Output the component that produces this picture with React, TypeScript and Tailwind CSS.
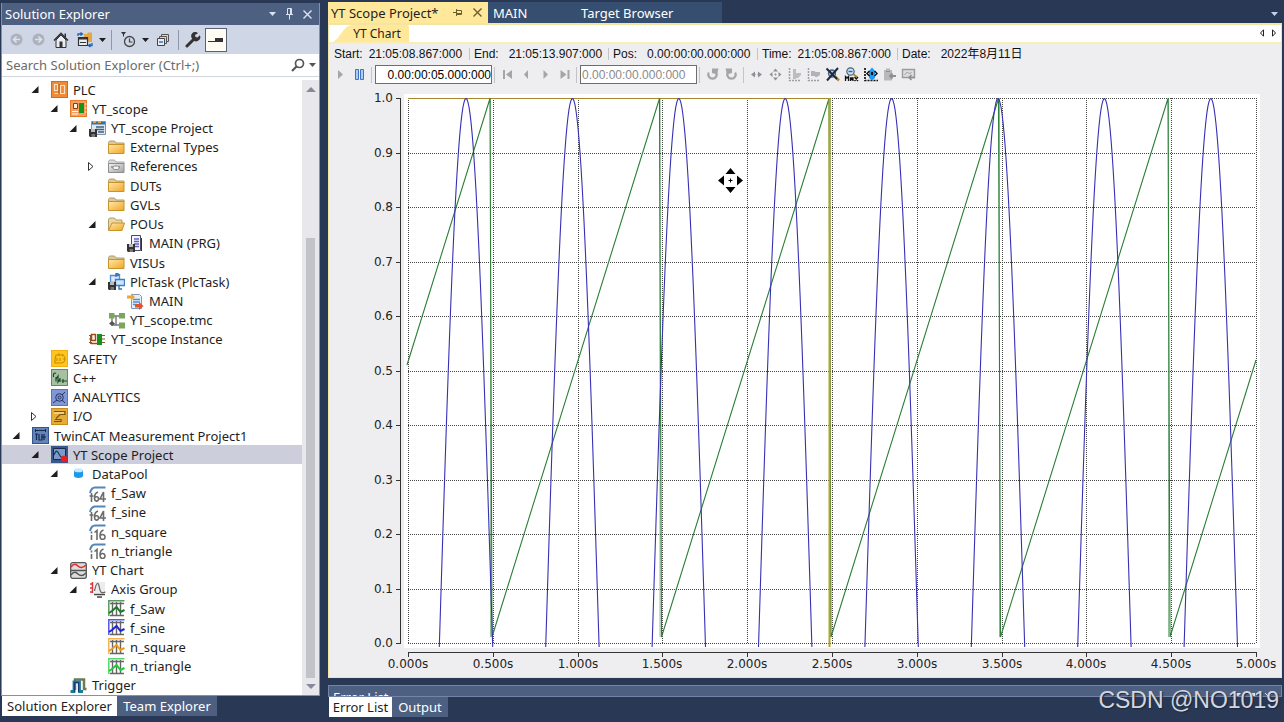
import { useState } from "react";
import type { ReactNode } from "react";

type Row = {
  label: string;
  level: number;
  icon: string;
  arrow?: "open" | "closed";
};

const rows: Row[] = [
  { label: "PLC", level: 1, icon: "plc", arrow: "open" },
  { label: "YT_scope", level: 2, icon: "plcProject", arrow: "open" },
  { label: "YT_scope Project", level: 3, icon: "project", arrow: "open" },
  { label: "External Types", level: 4, icon: "folder" },
  { label: "References", level: 4, icon: "refs", arrow: "closed" },
  { label: "DUTs", level: 4, icon: "folder" },
  { label: "GVLs", level: 4, icon: "folder" },
  { label: "POUs", level: 4, icon: "folderOpen", arrow: "open" },
  { label: "MAIN (PRG)", level: 5, icon: "prg" },
  { label: "VISUs", level: 4, icon: "folder" },
  { label: "PlcTask (PlcTask)", level: 4, icon: "task", arrow: "open" },
  { label: "MAIN", level: 5, icon: "taskCall" },
  { label: "YT_scope.tmc", level: 4, icon: "tmc" },
  { label: "YT_scope Instance", level: 3, icon: "instance" },
  { label: "SAFETY", level: 1, icon: "safety" },
  { label: "C++", level: 1, icon: "cpp" },
  { label: "ANALYTICS", level: 1, icon: "analytics" },
  { label: "I/O", level: 1, icon: "io", arrow: "closed" },
  { label: "TwinCAT Measurement Project1", level: 0, icon: "measurement", arrow: "open" },
  { label: "YT Scope Project", level: 1, icon: "scope", arrow: "open" },
  { label: "DataPool", level: 2, icon: "pool", arrow: "open" },
  { label: "f_Saw", level: 3, icon: "n64" },
  { label: "f_sine", level: 3, icon: "n64" },
  { label: "n_square", level: 3, icon: "n16" },
  { label: "n_triangle", level: 3, icon: "n16" },
  { label: "YT Chart", level: 2, icon: "chart", arrow: "open" },
  { label: "Axis Group", level: 3, icon: "axis", arrow: "open" },
  { label: "f_Saw", level: 4, icon: "chGreen" },
  { label: "f_sine", level: 4, icon: "chBlue" },
  { label: "n_square", level: 4, icon: "chOrange" },
  { label: "n_triangle", level: 4, icon: "chLime" },
  { label: "Trigger", level: 2, icon: "trigger" },
];

function Floppy() {
  return (
    <g>
      <path d="M0 9h8v8H1l-1-1z" fill="#333" />
      <path d="M2 9h4v3H2z" fill="#bbb" />
      <path d="M2.500 14h3.500v3h-3.500z" fill="#777" />
    </g>
  );
}

function Channel({ color }: { color: string }) {
  return (
    <g fill="none">
      <path d="M4.500 2v14M8.500 2v14M12.500 2v14M2 3.500h14M2 15.500h14" stroke="#666" strokeWidth="1.400" />
      <path d="M.8 16V.8H16.500" stroke={color} strokeWidth="1.500" opacity=".75" />
      <path d="M1 13l3-2 4.500-4 4 5 4-2" stroke={color} strokeWidth="2" />
    </g>
  );
}

function Num({ children }: { children: ReactNode }) {
  return (
    <g fill="none" strokeWidth="1.600">
      <path d="M1 8c1-4 3-5.500 5-5.500h10.500" stroke="#5586b8" strokeWidth="2" />
      <g stroke="#6c6c6c">{children}</g>
    </g>
  );
}

const drawings: Record<string, ReactNode> = {
  plc: (
    <g>
      <path d="M0 0h17v17H0z" fill="#d9691a" />
      <path d="M1 1h15v15H1z" fill="#ee8b38" />
      <path d="M3.500 3.500h3v6h-3zM9.500 4.500h4v8h-4zM3.500 12.500h4" fill="none" stroke="#fbe3c8" strokeWidth="1.200" />
      <path d="M8 3v10" stroke="#b9500c" />
    </g>
  ),
  plcProject: (
    <g>
      <path d="M0 0h17v17H0z" fill="#e67a2a" />
      <path d="M1 1h15v15H1z" fill="#f2a163" />
      <path d="M3.500 3.500h4v5h-4z" fill="#fff1de" stroke="#8a3d10" />
      <path d="M2 11.500h6M2 14h6M15 4h1.500M15 8h1.500M15 12h1.500" stroke="#fff" />
      <path d="M9 3h5v10H9z" fill="#12951b" />
    </g>
  ),
  project: (
    <g>
      <path d="M2.500 1.500h14v13h-14z" fill="#dbe7f2" stroke="#7d93ab" />
      <path d="M3 2h13v2.500H3z" fill="#3a6ea5" />
      <path d="M4 1h3v2H4zM9 1h3v2H9z" fill="#f0a040" />
      <path d="M7 7h8M7 9.500h8M9 12h6" stroke="#41637e" strokeWidth="1.300" />
      <Floppy />
    </g>
  ),
  folder: (
    <g>
      <path d="M.5 3.500l1-1.500h5l1.500 2h8v2H.5z" fill="#d9c9a0" stroke="#b39c64" />
      <path d="M.5 5.500h15.500v9H.5z" fill="url(#folderFill)" stroke="#c8922b" />
    </g>
  ),
  folderOpen: (
    <g>
      <path d="M.5 14V3.500l1-1.500h5l1.500 2h6v3" fill="#e7d6a6" stroke="#b39c64" />
      <path d="M.5 14.500L4 7h12.500l-2.500 7.500z" fill="url(#folderFill)" stroke="#c8922b" />
    </g>
  ),
  refs: (
    <g>
      <path d="M.5 3.500l1-1.500h5l1.500 2h8v2H.5z" fill="#d8d8d8" stroke="#aaa" />
      <path d="M.5 5.500h15.500v9H.5z" fill="url(#greyFill)" stroke="#8d8d8d" />
      <path d="M3 9h3M10 9h2" stroke="#666" />
      <rect x="5" y="8" width="6" height="3.500" rx="1.500" fill="#f5f5f5" stroke="#888" />
    </g>
  ),
  prg: (
    <g>
      <path d="M4.500.5h9v15h-9z" fill="#f5f5fc" stroke="#4b4b63" />
      <path d="M14.500 3v13" stroke="#333" />
      <path d="M7 4h5M7 6.500h5M7 9h5M8 11.500h4" stroke="#6560c8" strokeWidth="1.400" />
      <Floppy />
    </g>
  ),
  task: (
    <g>
      <path d="M2.500 2.500h9v7h-9z" fill="#d8eaff" stroke="#4a90d9" strokeWidth="1.300" />
      <path d="M7.500 6.500h9v6h-9z" fill="#cfe4fa" stroke="#3b7fc6" strokeWidth="1.300" />
      <path d="M8 0l3 1.500L8 3zM11 12.500V16h3" fill="none" stroke="#2f74bd" strokeWidth="1.400" />
      <Floppy />
    </g>
  ),
  taskCall: (
    <g>
      <path d="M4.500 1.500h8l2 2v12h-10z" fill="#e4effa" stroke="#7e99bb" />
      <path d="M6 6.500h7M6 9h7M6 11.500h4" stroke="#5a8fcc" strokeWidth="1.300" />
      <path d="M0 2.500h4V.5l4 3.500-4 3.500V5.500H0z" fill="#f5a42c" />
      <path d="M8 11h4V9l4.500 4-4.500 4v-2.500H8z" fill="#e4512b" />
    </g>
  ),
  tmc: (
    <g>
      <path d="M4 5v8h8M4 4h8M8 4v9" fill="none" stroke="#777" strokeWidth="1.400" />
      <path d="M1 1h5.500v5.500H1zM11 1h6v5.500h-6zM11 10.500h6v6h-6z" fill="#79a85a" />
      <path d="M4 9l3 2.500L4 14l-3-2.500z" fill="#555" />
    </g>
  ),
  instance: (
    <g>
      <path d="M1.500 4v9M0 4.500h3M0 8h3M0 11.500h3M13 4.500h3M13 8h3M13 11.500h3" stroke="#8a5a2c" />
      <path d="M2.500 3.500h4v6h-4z" fill="#fff4e8" stroke="#a5471a" strokeWidth="1.500" />
      <path d="M2 12.500h6" stroke="#a5471a" strokeWidth="1.500" />
      <path d="M8 3h5v11H8z" fill="#14901c" />
    </g>
  ),
  safety: (
    <g>
      <path d="M0 0h17v17H0z" fill="#f2ae12" />
      <path d="M1 1h15v15H1z" fill="#ffc61e" />
      <path d="M5 5h5a3.500 3.500 0 010 8H4V9zM8 3v3M12 4l-1 2M14 9h-2M6 8v3M9 8v3" fill="none" stroke="#c98b06" strokeWidth="1.100" />
    </g>
  ),
  cpp: (
    <g>
      <path d="M0 0h17v17H0z" fill="#5f8d5d" />
      <path d="M1 1h15v15H1z" fill="#a6c19f" />
      <path d="M5 4.500C3 3 2 5 2.500 8M5 8v4.500M5 10l2-3v6l2-3M9 9v4M12 10v4M10.500 12h3.500M14 12h2" fill="none" stroke="#1c4a25" strokeWidth="1.200" />
    </g>
  ),
  analytics: (
    <g>
      <path d="M0 0h17v17H0z" fill="#5b74bd" />
      <path d="M1 1h15v15H1z" fill="#8196d4" />
      <circle cx="8.500" cy="8.500" r="3.800" fill="none" stroke="#23355f" />
      <circle cx="8.500" cy="8.500" r="1.500" fill="none" stroke="#23355f" />
      <path d="M2 14l4-3M11 6l3-3M11 11l3 3" fill="none" stroke="#23355f" />
    </g>
  ),
  io: (
    <g>
      <path d="M0 0h17v17H0z" fill="#c98b1a" />
      <path d="M1 1h15v15H1z" fill="#e6ac3a" />
      <path d="M3 3.500h11v3H9l-4 4M3 13.500h7v-2H4" fill="none" stroke="#7d520a" strokeWidth="1.200" />
      <path d="M3 5h10" stroke="#fff0c8" />
    </g>
  ),
  measurement: (
    <g>
      <path d="M0 0h17v17H0z" fill="#35568c" />
      <path d="M1 1h15v15H1z" fill="#6384b8" />
      <path d="M3 3.500h11M3.500 2v3M13.500 2v3" stroke="#16294c" />
      <path d="M3 7h3M4.500 7v6M7 7v6h3V7M12 7v6M9 10h5" fill="none" stroke="#16294c" strokeWidth="1.200" />
    </g>
  ),
  scope: (
    <g>
      <path d="M0 0h17v17H0z" fill="#38588c" />
      <path d="M2.500 2.500h12v11h-12z" fill="#7d9ac6" stroke="#162b50" />
      <path d="M3 9c2-5 3-5 5-1s3 4 4 2" fill="none" stroke="#1c3765" strokeWidth="1.200" />
      <circle cx="13" cy="13" r="3.200" fill="#ee1c1c" />
    </g>
  ),
  pool: (
    <g>
      <path d="M4 5v6c0 2.500 9 2.500 9 0V5z" fill="#1a9bea" />
      <ellipse cx="8.500" cy="5.200" rx="4.500" ry="2" fill="#c3e7fb" />
    </g>
  ),
  n64: (
    <Num>
      <path d="M2.500 8v9M.5 11h4M9 7c-3 1-3.500 3-3.500 6 0 4 4 4 4 1s-4-3-4 0M14.500 17V7l-3.500 7h6" />
    </Num>
  ),
  n16: (
    <Num>
      <path d="M2.500 8.500v2M2.500 12v5M5.500 9.500l2.500-2v9.500M14.500 7c-3 1-3.500 3-3.500 6 0 4.500 5 4.500 5 1s-5-3-5 0" />
    </Num>
  ),
  chart: (
    <g fill="none">
      <rect x=".7" y=".7" width="15.600" height="15.600" rx="2" fill="#ddd" stroke="#555" strokeWidth="1.300" />
      <path d="M1 8.500h15" stroke="#555" strokeWidth="1.500" />
      <path d="M1 5c3-4 5-3 7-1s5 2 8-1" stroke="#e52b2b" strokeWidth="1.700" />
      <path d="M1 13c3-4 5-3 7-1s5 2 8-1" stroke="#555" strokeWidth="1.500" />
    </g>
  ),
  axis: (
    <g fill="none">
      <path d="M6 1h10v11H6z" fill="#ececec" />
      <path d="M3.500 1v11M1 3h3M1 7h3M1 11h3" stroke="#e03434" strokeWidth="1.500" />
      <path d="M5.500 10c2-10 4-9 5-3s3 5 6 4" stroke="#666" strokeWidth="1.200" />
      <path d="M5 13.500h11M8 16h5" stroke="#444" strokeWidth="1.400" />
    </g>
  ),
  chGreen: <Channel color="#1c7a26" />,
  chBlue: <Channel color="#2020e0" />,
  chOrange: <Channel color="#f09818" />,
  chLime: <Channel color="#1fc93a" />,
  trigger: (
    <g fill="none">
      <path d="M5 13V2.500h9V12h2.500" stroke="#6f7a50" strokeWidth="2.500" />
      <path d="M.5 14.500H4V5h5.500v9.500H13" stroke="#1a7c98" strokeWidth="2.800" />
      <path d="M4.500 15V5.500h4V15" stroke="#103f78" strokeWidth="1.200" />
    </g>
  ),
};

function TreeRow({ row, active, onSelect }: { row: Row; active: boolean; onSelect: () => void }) {
  return (
    <li
      className={`flex min-h-0 flex-1 items-center ${active ? "bg-[#cccedb]" : ""}`}
      style={{ paddingLeft: 8 + row.level * 19 }}
    >
      <span className="w-[22px] shrink-0">
        {row.arrow && (
          <button aria-label={`Toggle ${row.label}`} className="block">
            <svg width="11" height="11" viewBox="0 0 11 11">
              {row.arrow === "open" ? (
                <path d="M9.500 2v7h-7z" fill="#1e1e1e" />
              ) : (
                <path d="M2.500 1.500v8l4.500-4z" fill="#fff" stroke="#333" />
              )}
            </svg>
          </button>
        )}
      </span>
      <button onClick={onSelect} className="flex items-center gap-[5px] whitespace-nowrap leading-4">
        <svg width="17" height="17" viewBox="0 0 17 17" className="shrink-0">
          {drawings[row.icon]}
        </svg>
        {row.label}
      </button>
    </li>
  );
}

function Caret({ color = "#1e1e1e" }: { color?: string }) {
  return (
    <svg width="7" height="4" viewBox="0 0 7 4">
      <path d="M0 0h7L3.500 4z" fill={color} />
    </svg>
  );
}

function ExplorerToolbar() {
  return (
    <div className="flex h-[29px] shrink-0 items-center bg-[#cfd6e5] pl-[3px]">
      <button aria-label="Back" className="flex w-[22px] justify-center">
        <svg width="13" height="13" viewBox="0 0 13 13">
          <circle cx="6.500" cy="6.500" r="6" fill="#adb2bf" />
          <path d="M10 6.500H3.500M6.500 3.500l-3 3 3 3" fill="none" stroke="#dde2ec" strokeWidth="1.500" />
        </svg>
      </button>
      <button aria-label="Forward" className="flex w-[22px] justify-center">
        <svg width="13" height="13" viewBox="0 0 13 13">
          <circle cx="6.500" cy="6.500" r="6" fill="#adb2bf" />
          <path d="M3 6.500h6.500M6.500 3.500l3 3-3 3" fill="none" stroke="#dde2ec" strokeWidth="1.500" />
        </svg>
      </button>
      <button aria-label="Home" className="flex w-[24px] justify-center">
        <svg width="16" height="16" viewBox="0 0 16 16">
          <path d="M3 8v7.500h10V8L8 3z" fill="#e9ecf4" stroke="#333" />
          <path d="M1 8.500l7-7 7 7" fill="none" stroke="#333" strokeWidth="1.600" />
          <path d="M11.500 1.500h1.500v4h-1.500zM6.500 9.500h3v6h-3z" fill="#333" />
        </svg>
      </button>
      <button aria-label="Sync views" className="flex w-[24px] justify-center">
        <svg width="16" height="16" viewBox="0 0 16 16">
          <path d="M7 2h3l1-1.500h4V10H7z" fill="#e5a645" />
          <path d="M1.500 5.500h9v8h-9z" fill="#e9ecf4" stroke="#333" strokeWidth="1.200" />
          <path d="M1 5.500h10v2H1zM3 10h6v1H3z" fill="#333" />
          <path d="M1 4V2h4M3.500.5L5.500 2l-2 1.500M15 11v2.500h-3M13.500 12l-2 1.500 2 1.500" fill="none" stroke="#1d62b5" strokeWidth="1.300" />
        </svg>
      </button>
      <span className="flex w-[10px] justify-center"><Caret /></span>
      <span className="mx-[4px] h-5 w-px bg-[#8e97ab]" />
      <button aria-label="Pending changes filter" className="ml-[2px] flex w-[20px] justify-center">
        <svg width="16" height="16" viewBox="0 0 16 16">
          <path d="M1 0h5L4 2.500V5L3 4V2.500z" fill="#333" />
          <circle cx="9.500" cy="9.500" r="5" fill="none" stroke="#444" strokeWidth="1.300" />
          <path d="M9.500 6.500v3.500h3" fill="none" stroke="#444" strokeWidth="1.200" />
        </svg>
      </button>
      <span className="flex w-[14px] justify-center"><Caret /></span>
      <button aria-label="Collapse all" className="flex w-[22px] justify-center">
        <svg width="14" height="14" viewBox="0 0 14 14">
          <path d="M5.500 3V1.500h7v7H11M3.500 5V3.500h7v7H9" fill="none" stroke="#555" />
          <path d="M1.500 5.500h7v7h-7z" fill="#e9ecf4" stroke="#444" />
          <path d="M3 9h4" stroke="#1d62b5" strokeWidth="1.300" />
        </svg>
      </button>
      <span className="mx-[4px] h-5 w-px bg-[#8e97ab]" />
      <button aria-label="Properties" className="flex w-[20px] justify-center">
        <svg width="16" height="16" viewBox="0 0 16 16">
          <path d="M2 14l6.500-6.500" stroke="#333" strokeWidth="3" strokeLinecap="round" />
          <path d="M13 1.200A4 4 0 107.500 7a4 4 0 007.300-3.800L12.500 5.500l-2-.5-.5-2z" fill="#333" />
        </svg>
      </button>
      <button aria-label="Preview selected items" className="ml-[2px] flex h-6 w-[22px] items-center justify-center border border-[#5a6273] bg-[#fffcf4]">
        <svg width="16" height="8" viewBox="0 0 16 8">
          <path d="M0 5h7V2h8v4H0z" fill="#333" />
        </svg>
      </button>
    </div>
  );
}

function SolutionExplorer() {
  const [selected, setSelected] = useState(19);

  return (
    <aside className="flex w-[320px] shrink-0 flex-col pl-[1px] pt-[3px]">
      <div className="flex min-h-0 flex-1 flex-col border border-t-0 border-[#8591ab] bg-white">
        <div className="flex h-[22px] shrink-0 items-center bg-[#4d6082] pl-[3px] pr-[4px] text-white">
          <h2 className="flex-1">Solution Explorer</h2>
          <button aria-label="Window position" className="flex w-[17px] justify-center"><Caret color="#dbe2f0" /></button>
          <button aria-label="Auto hide" className="flex w-[17px] justify-center">
            <svg width="9" height="12" viewBox="0 0 9 12">
              <path d="M2.500 6.500v-6h4v6M1 6.500h7M4.500 7v4.500M5.500 1v5" fill="none" stroke="#dbe2f0" />
            </svg>
          </button>
          <button aria-label="Close" className="ml-[2px] flex w-[15px] justify-center">
            <svg width="9" height="9" viewBox="0 0 9 9">
              <path d="M.5.5l8 8M8.500.5l-8 8" stroke="#dbe2f0" strokeWidth="1.400" />
            </svg>
          </button>
        </div>
        <ExplorerToolbar />
        <div className="flex h-[23px] shrink-0 items-center border-b border-[#d0d5e0] pr-[3px]">
          <input
            aria-label="Search Solution Explorer"
            placeholder="Search Solution Explorer (Ctrl+;)"
            className="min-w-0 flex-1 pl-[4px] outline-none placeholder:text-[#6b6b6b]"
          />
          <button aria-label="Search" className="mr-[4px]">
            <svg width="14" height="14" viewBox="0 0 14 14">
              <circle cx="8.500" cy="5.500" r="4" fill="none" stroke="#555" strokeWidth="1.700" />
              <path d="M5.500 8.500L1 13" stroke="#555" strokeWidth="2.200" />
            </svg>
          </button>
          <button aria-label="Search options"><Caret color="#555" /></button>
        </div>
        <div className="flex min-h-0 flex-1 pt-[3px]">
          <ul className="flex min-w-0 flex-1 flex-col">
            {rows.map((row, i) => (
              <TreeRow key={i} row={row} active={selected === i} onSelect={() => setSelected(i)} />
            ))}
          </ul>
          <div className="flex w-[17px] flex-col items-center bg-[#e8e8ec]">
            <button aria-label="Scroll up" className="py-[7px]">
              <svg width="10" height="5" viewBox="0 0 10 5"><path d="M0 5h10L5 0z" fill="#868999" /></svg>
            </button>
            <div className="grow-[25]" />
            <div className="w-[9px] grow-[79] bg-[#c2c3c9]" />
            <button aria-label="Scroll down" className="py-[6px]">
              <svg width="10" height="5" viewBox="0 0 10 5"><path d="M0 0h10L5 5z" fill="#868999" /></svg>
            </button>
          </div>
        </div>
      </div>
      <div className="flex h-[20px] shrink-0 pl-[1px]">
        <button className="w-[115px] bg-white">Solution Explorer</button>
        <button className="w-[100px] bg-[#4d6082] text-white">Team Explorer</button>
      </div>
      <div className="h-[6px]" />
    </aside>
  );
}

function ToolButton({ label, children }: { label: string; children: ReactNode }) {
  return (
    <button aria-label={label} className="flex w-[19px] shrink-0 justify-center">
      <svg width="15" height="15" viewBox="0 0 15 15">{children}</svg>
    </button>
  );
}

function Sep() {
  return <span className="mx-[2px] h-4 w-[2px] shrink-0 border-l border-[#c4c4c8]" />;
}

function ScopeToolbar() {
  return (
    <div className="flex h-[21px] shrink-0 items-center pl-[2px]">
      <ToolButton label="Play"><path d="M5 3v9l5-4.500z" fill="#a5a5a8" /></ToolButton>
      <ToolButton label="Pause">
        <path d="M3.500 2.500h3v10h-3zM8.500 2.500h3v10h-3z" fill="#a9cdf7" stroke="#3f74bd" />
      </ToolButton>
      <Sep />
      <input
        aria-label="Display width"
        defaultValue="0.00:00:05.000:000"
        className="h-[19px] w-[117px] border border-[#6e6e6e] bg-white text-right text-xs text-black"
      />
      <Sep />
      <ToolButton label="First"><path d="M3 3h2v9H3zM12 3v9L6 7.500z" fill="#a5a5a8" /></ToolButton>
      <ToolButton label="Previous"><path d="M9 3v9L5 7.500z" fill="#a5a5a8" /></ToolButton>
      <ToolButton label="Next"><path d="M5.500 3v9l4.500-4.500z" fill="#a5a5a8" /></ToolButton>
      <ToolButton label="Last"><path d="M10.500 3h2v9h-2zM3.500 3v9l6-4.500z" fill="#a5a5a8" /></ToolButton>
      <Sep />
      <input
        aria-label="Display position"
        defaultValue="0.00:00:00.000:000"
        className="h-[19px] w-[117px] border border-[#6e6e6e] bg-white pl-[1px] text-xs text-[#8a8a8a]"
      />
      <Sep />
      <ToolButton label="Undo">
        <path d="M3.800 5.500a4.200 4.200 0 107.400 0" fill="none" stroke="#a5a5a8" strokeWidth="2.200" />
        <path d="M7 1.500h6.500L12 7.500 7 6z" fill="#a5a5a8" />
      </ToolButton>
      <ToolButton label="Redo">
        <path d="M11.200 5.500a4.200 4.200 0 11-7.400 0" fill="none" stroke="#a5a5a8" strokeWidth="2.200" />
        <path d="M8 1.500H1.500L3 7.500 8 6z" fill="#a5a5a8" />
      </ToolButton>
      <Sep />
      <ToolButton label="Scroll X">
        <path d="M2 7.500l4-3v6zM13 7.500l-4-3v6z" fill="#909094" />
        <path d="M5 7.500h1.500M8.500 7.500H10" stroke="#909094" strokeWidth="1.600" />
      </ToolButton>
      <ToolButton label="Scroll XY">
        <path d="M1.500 7.500l3-2.500v5zM13.500 7.500l-3-2.500v5zM7.500 1.500l2.500 3H5zM7.500 13.500l2.500-3H5z" fill="#909094" />
        <path d="M6.500 7.500h2M7.500 6.500v2" stroke="#909094" />
      </ToolButton>
      <ToolButton label="Zoom X">
        <path d="M2.500 1v12.500H14" fill="none" stroke="#a0a0a4" strokeWidth="1.500" strokeDasharray="2 1" />
        <path d="M6 2h3v10H6zM9 6h5v2l-3 3H9z" fill="#bdbdc0" />
      </ToolButton>
      <ToolButton label="Zoom XY">
        <path d="M2.500 1v12.500H14" fill="none" stroke="#a0a0a4" strokeWidth="1.500" strokeDasharray="2 1" />
        <path d="M5 4h4v5H5zM9 5h5v3l-3 2H9z" fill="#b3b3b7" />
      </ToolButton>
      <ToolButton label="Reset zoom">
        <circle cx="7" cy="6.500" r="3.500" fill="#b4cbe0" stroke="#47607c" strokeWidth="1.300" />
        <path d="M10 9.500l4 4" stroke="#b18a35" strokeWidth="2.500" />
        <path d="M1.500 1.500L12 12M13 1L2 13.500" stroke="#1f2b3c" strokeWidth="2" />
      </ToolButton>
      <ToolButton label="Zoom max">
        <circle cx="6.500" cy="4.500" r="3.700" fill="#cfe3f5" stroke="#47607c" strokeWidth="1.200" />
        <path d="M4.500 4.500h4" stroke="#2268b8" strokeWidth="1.500" />
        <path d="M9 7l4 3" stroke="#b18a35" strokeWidth="2" />
        <path d="M1.500 14V9.500l1.500 1.500 1.500-1.500V14M6.500 14v-3h2.500v3M6.500 12.500H9M10.500 10l3.500 4M14 10l-3.500 4" fill="none" stroke="#111" strokeWidth="1.300" />
      </ToolButton>
      <ToolButton label="Auto scale">
        <path d="M2 1v12.500h13" fill="none" stroke="#111" strokeWidth="1.700" strokeDasharray="2 1" />
        <path d="M6 4l3-3.500L12 4v7l-3 2.500L6 11z" fill="#1d9bf5" />
        <path d="M6.500 4L4 6.500 6.500 9M11.500 4L14 6.500 11.500 9" fill="none" stroke="#111" strokeWidth="1.500" />
        <path d="M9 5v3" stroke="#111" strokeWidth="2" />
      </ToolButton>
      <ToolButton label="Paste">
        <path d="M2 3h2V1.500h4V3h2v10.500H2z" fill="#b9b9bc" />
        <path d="M4 4.500h4" stroke="#909094" />
        <path d="M14 9H9M10.500 6.500L8 9l2.500 2.500" fill="none" stroke="#8f8f93" strokeWidth="1.800" />
      </ToolButton>
      <ToolButton label="Export picture">
        <path d="M1.500 2.500h12v8h-12z" fill="#dcdcde" stroke="#9b9b9f" strokeWidth="1.400" />
        <path d="M3.500 8l3-3 2 2 2-2" fill="none" stroke="#9b9b9f" />
        <path d="M14 10.500H8M10.500 8L8 10.500l2.500 2.500" fill="none" stroke="#8f8f93" strokeWidth="1.600" />
      </ToolButton>
    </div>
  );
}

// plot geometry, in the units of the chart's viewBox
const LEFT = 408;
const TOP = 98.5;
const WIDTH = 848;
const HEIGHT = 545;

function sinePath() {
  const pts: string[] = [];
  for (let x = LEFT; x <= LEFT + WIDTH; x += 1) {
    const v = Math.cos((2 * Math.PI * (x - 466)) / 106.4);
    pts.push(`${x},${(TOP + HEIGHT - HEIGHT * v).toFixed(1)}`);
  }
  return pts.join(" ");
}

function sawPath() {
  const pts = ["407,365"];
  for (let i = 0; i < 5; i++) {
    const x = 490 + i * 169.5;
    pts.push(`${x},${TOP}`, `${x + 2},637`);
  }
  pts.push("1256,360");
  return pts.join(" ");
}

function Chart() {
  const ys = Array.from({ length: 11 }, (_, i) => i);
  return (
    <svg viewBox="329 85 952 592" className="min-h-0 w-full flex-1" role="img" aria-label="YT Chart">
      <defs>
        <clipPath id="plot"><rect x="404" y="94" width="856" height="553" /></clipPath>
      </defs>
      <rect x="404" y="94" width="856" height="554" fill="#fff" />
      <g stroke="#444" strokeDasharray="1 1" shapeRendering="crispEdges">
        {ys.map((i) => (
          <path key={`h${i}`} d={`M408 ${Math.round(98 + i * 54.5) + 0.5}H1256`} />
        ))}
        {ys.map((i) => (
          <path key={`v${i}`} d={`M${Math.round(408 + i * 84.8) + 0.5} 98V644`} />
        ))}
      </g>
      <g fill="none" clipPath="url(#plot)">
        <path d="M408 98.500H829" stroke="#a8872f" />
        <path d="M490.500 98V637M660 98V637M830.500 98V637M999.500 98V637M1168.500 98V637" stroke="#2d7d36" opacity=".5" />
        <polyline points={sawPath()} stroke="#2b7f36" strokeWidth="1.100" />
        <path d="M829.500 98V647" stroke="#b5a42c" strokeWidth="2" />
        <polyline points={sinePath()} stroke="#3630b5" strokeWidth="1.100" />
      </g>
      <g stroke="#333" fill="none" shapeRendering="crispEdges">
        <path d="M400.500 98V644M408 652.500H1256" />
        {ys.map((i) => (
          <path key={i} d={`M396 ${Math.round(98 + i * 54.5) + 0.5}h5M${Math.round(408 + i * 84.8) + 0.5} 652v5`} />
        ))}
      </g>
      <g fontFamily="DejaVu Sans, sans-serif" fontSize="12" fill="#222">
        {ys.map((i) => (
          <text key={`y${i}`} x="393" y={Math.round(102 + i * 54.5)} textAnchor="end">
            {(1 - i / 10).toFixed(1)}
          </text>
        ))}
        {ys.map((i) => (
          <text key={`x${i}`} x={Math.round(408 + i * 84.8)} y="668" textAnchor="middle">
            {(i / 2).toFixed(3)}s
          </text>
        ))}
      </g>
      <g fill="#000">
        <path d="M730.500 168l5 6h-10zM730.500 193l5-6h-10zM718 180.500l6-5v10zM743 180.500l-6-5v10z" />
        <path d="M728.500 180h4v1h-4zM730 178.500h1v4h-1z" />
      </g>
    </svg>
  );
}

const times = [
  { label: "Start:", value: "21:05:08.867:000", cls: "w-[140px] gap-[6px] pl-[5px]" },
  { label: "End:", value: "21:05:13.907:000", cls: "w-[139px] gap-[10px] border-l pl-[4px]" },
  { label: "Pos:", value: "0.00:00:00.000:000", cls: "w-[149px] gap-[10px] border-l pl-[4px]" },
  { label: "Time:", value: "21:05:08.867:000", cls: "w-[140px] gap-[6px] border-l pl-[4px]" },
  { label: "Date:", value: "2022年8月11日", cls: "gap-[10px] border-l pl-[4px]" },
];

function ScopeWindow() {
  return (
    <section className="flex min-h-0 flex-1 flex-col">
      <div className="flex h-[21px] shrink-0 items-stretch pr-[4px]">
        <div className="flex w-[160px] items-center bg-[#ffe89a] pl-[3px] pr-[6px]">
          <button className="flex-1 whitespace-nowrap text-left text-[#1e1e1e]">YT Scope Project*</button>
          <button aria-label="Pin tab">
            <svg width="10" height="9" viewBox="0 0 10 9">
              <path d="M0 4.500h3.500M3.500 1v7M3.500 2.500h5v4h-5M4 5.500h4" fill="none" stroke="#6d5f2e" />
            </svg>
          </button>
          <button aria-label="Close tab" className="ml-[10px]">
            <svg width="9" height="9" viewBox="0 0 9 9">
              <path d="M.5.5l8 8M8.500.5l-8 8" stroke="#6d5f2e" strokeWidth="1.400" />
            </svg>
          </button>
        </div>
        <button className="w-[84px] bg-[#364e6f] pl-[5px] text-left text-white">MAIN</button>
        <button className="w-[150px] bg-[#364e6f] pl-[9px] text-left text-white">Target Browser</button>
        <div className="flex-1" />
        <button aria-label="Window list" className="pt-[2px]"><Caret color="#c5d2ea" /></button>
      </div>
      <div className="flex min-h-0 flex-1 flex-col border border-t-2 border-[#f3e6a4] bg-[#eeeef0]">
        <div className="flex h-[19px] shrink-0 items-end justify-between border-b-2 border-[#faeeb4] bg-white pr-[4px]">
          <button className="relative h-[17px] w-[80px] pl-[16px] text-xs text-[#1e1e1e]">
            <svg className="absolute inset-0 h-full w-full" viewBox="0 0 80 17" preserveAspectRatio="none">
              <path d="M4 17C12 13 14 0 24 0h54q2 0 2 2v15z" fill="#ffe89a" />
            </svg>
            <span className="relative">YT Chart</span>
          </button>
          <div className="flex gap-[6px] pb-[5px]">
            <button aria-label="Scroll tabs left">
              <svg width="6" height="8" viewBox="0 0 6 8"><path d="M4.500.8v6.400L1.500 4z" fill="none" stroke="#222" /></svg>
            </button>
            <button aria-label="Scroll tabs right">
              <svg width="6" height="8" viewBox="0 0 6 8"><path d="M1.500.8v6.400l3-3.200z" fill="none" stroke="#222" /></svg>
            </button>
          </div>
        </div>
        <div className="flex h-[20px] shrink-0 items-center font-['Liberation_Sans','Noto_Sans_CJK_SC',sans-serif] text-xs leading-3 text-[#111]">
          {times.map((t) => (
            <div key={t.label} className={`flex shrink-0 border-[#c4c4c8] ${t.cls}`}>
              <span>{t.label}</span>
              <span>{t.value}</span>
            </div>
          ))}
        </div>
        <div className="flex shrink-0 font-['Liberation_Sans',sans-serif]">
          <ScopeToolbar />
        </div>
        <Chart />
      </div>
    </section>
  );
}

function ErrorPanel() {
  return (
    <section className="relative mt-[7px] shrink-0">
      <div className="flex h-[12px] items-start justify-between overflow-hidden border border-[#7484a8] bg-[#4d6082] pl-[4px] pr-[8px]">
        <h2 className="pt-[3px] text-white">Error List</h2>
        <div className="flex gap-[8px] pt-[7px]">
          <Caret color="#dbe2f0" />
          <svg width="8" height="8" viewBox="0 0 8 8"><path d="M2 0h4v8H2z" fill="#dbe2f0" /></svg>
          <svg width="8" height="8" viewBox="0 0 8 8"><path d="M0 0l8 8M8 0L0 8" stroke="#dbe2f0" /></svg>
        </div>
      </div>
      <div className="flex h-[20px] pl-[1px]">
        <button className="w-[63px] bg-white">Error List</button>
        <button className="w-[56px] bg-[#4d6082] text-white">Output</button>
      </div>
      <div className="h-[5px]" />
      <p className="absolute bottom-[8px] right-[3px] font-['Liberation_Sans',sans-serif] text-[23px] leading-7 text-[#d3d6dd] [text-shadow:1px_1px_1px_#1b263a]">
        CSDN @NO1019
      </p>
    </section>
  );
}

export default function App() {
  return (
    <main className="flex h-screen min-h-[600px] gap-[8px] overflow-hidden bg-[#293955] pr-[2px] font-['Noto_Sans','Noto_Sans_CJK_SC',sans-serif] text-[13px] leading-4 text-[#1e1e1e]">
      <svg width="0" height="0" className="absolute">
        <defs>
          <linearGradient id="folderFill" x2="1" y2="1">
            <stop stopColor="#ffe9a8" />
            <stop offset="1" stopColor="#f0a526" />
          </linearGradient>
          <linearGradient id="greyFill" x2="1" y2="1">
            <stop stopColor="#f2f2f2" />
            <stop offset="1" stopColor="#a2a2a2" />
          </linearGradient>
        </defs>
      </svg>
      <SolutionExplorer />
      <div className="flex min-w-0 flex-1 flex-col pt-[2px]">
        <ScopeWindow />
        <ErrorPanel />
      </div>
    </main>
  );
}
